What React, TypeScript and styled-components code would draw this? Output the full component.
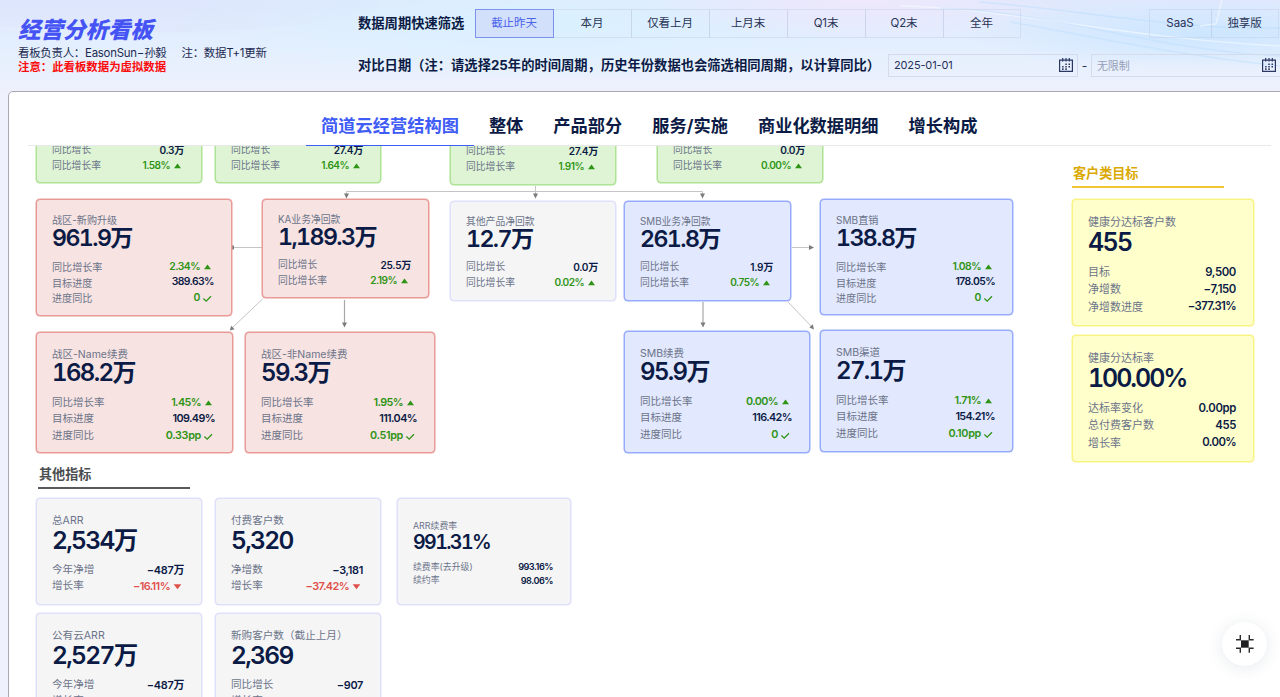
import React from 'react';
import styled, { createGlobalStyle, css } from 'styled-components';

const GlobalStyle = createGlobalStyle`
  * { box-sizing: border-box; }
  html, body { margin: 0; padding: 0; }
  body {
    width: 1280px;
    height: 697px;
    overflow: hidden;
    color: #0b1b45;
    font-family: Inter, "Noto Sans CJK SC", sans-serif;
  }
`;

/* ---------- page frame ---------- */

const Page = styled.div`
  position: relative;
  display: flex;
  flex-direction: column;
  width: 1280px;
  height: 697px;
  padding-left: 8px;
  overflow: hidden;
  background: #eff1fc;
`;

const Backdrop = styled.svg`
  position: absolute;
  left: 0;
  top: 0;
  width: 1280px;
  height: 160px;
`;

const Header = styled.header`
  position: relative;
  display: flex;
  height: 91px;
  flex: none;
`;

const Brand = styled.div`
  width: 350px;
  padding: 17px 0 0 10px;
`;

const BrandTitle = styled.h1`
  margin: 0;
  height: 29px;
  line-height: 25px;
  font-size: 22.5px;
  font-weight: 900;
  font-style: italic;
  color: #4553f5;
  white-space: nowrap;
`;

const BrandNote = styled.p<{ $alert?: boolean }>`
  display: flex;
  gap: 15px;
  margin: 0;
  height: 14px;
  line-height: 14px;
  font-size: 11.4px;
  white-space: nowrap;
  letter-spacing: ${(p) => (p.$alert ? 0 : '-0.22px')};
  color: ${(p) => (p.$alert ? '#fb0d0d' : '#1d2a50')};
  font-weight: ${(p) => (p.$alert ? 700 : 400)};
`;

const Filters = styled.div`
  display: flex;
  flex-direction: column;
  flex: 1;
  min-width: 0;
`;

const FilterRow = styled.div<{ $top: number; $height: number }>`
  display: flex;
  align-items: center;
  height: ${(p) => p.$height}px;
  margin-top: ${(p) => p.$top}px;
`;

const FilterLabel = styled.span<{ $width: number }>`
  flex: none;
  width: ${(p) => p.$width}px;
  padding-bottom: 2px;
  font-size: 13.3px;
  font-weight: 700;
  white-space: nowrap;
`;

const Segments = styled.div<{ $gap?: number }>`
  display: flex;
  flex: none;
  margin-left: ${(p) => p.$gap ?? 0}px;
`;

const Segment = styled.button<{ $width: number; $active?: boolean }>`
  width: ${(p) => p.$width}px;
  height: 29px;
  margin: 0 0 0 -1px;
  padding: 0 1px 2px 0;
  border: 1px solid rgba(190, 202, 226, 0.42);
  background: transparent;
  font: 400 11.5px/26px Inter, 'Noto Sans CJK SC', sans-serif;
  letter-spacing: -0.1px;
  color: #2a3557;
  &:first-child { margin-left: 0; }
  ${(p) =>
    p.$active &&
    css`
      position: relative;
      border-color: #7b93ec;
      background: #d3e0fb;
      color: #4a63ea;
    `}
`;

const DateBox = styled.div<{ $empty?: boolean; $width: number }>`
  display: flex;
  flex: none;
  align-items: center;
  justify-content: space-between;
  width: ${(p) => p.$width}px;
  height: 23px;
  padding: 0 4px 1px 5px;
  border: 1px solid #d5dbea;
  font-size: 11px;
  letter-spacing: -0.15px;
  color: ${(p) => (p.$empty ? '#979fb8' : '#26315a')};
`;

const Dash = styled.span`
  flex: none;
  width: 13px;
  text-align: center;
  font-size: 12px;
  color: #26315a;
`;

/* ---------- panel and tabs ---------- */

const Panel = styled.main`
  position: relative;
  display: flex;
  flex-direction: column;
  width: 1290px;
  height: 620px;
  border: 1px solid #a9a9b4;
  border-radius: 5px 0 0 0;
  background: #fff;
`;

const Tabs = styled.nav`
  display: flex;
  flex: none;
  width: 1243px;
  height: 54px;
  margin-left: 19px;
  padding-left: 278px;
  border-bottom: 1px solid #e9e9ed;
`;

const Tab = styled.a<{ $active?: boolean }>`
  height: 54px;
  padding: 20px 15px 0;
  line-height: 28px;
  font-size: 17.24px;
  font-weight: 700;
  white-space: nowrap;
  color: ${(p) => (p.$active ? '#3f5cf6' : '#0b1b45')};
  border-bottom: ${(p) => (p.$active ? '1px solid #3f5cf6' : '0')};
`;

const Board = styled.div`
  display: flex;
  height: 551px;
  overflow: hidden;
`;

const MainColumn = styled.div`
  width: 1063px;
  flex: none;
`;

const SideColumn = styled.aside`
  display: flex;
  flex-direction: column;
  width: 182px;
  padding-top: 16px;
`;

const Diagram = styled.div`
  position: relative;
  height: 317px;
`;

const Wires = styled.svg`
  position: absolute;
  left: 0;
  top: 0;
  overflow: visible;
`;

const SectionTitle = styled.h2<{ $tone: 'gold' | 'slate' }>`
  width: 152px;
  height: 26px;
  margin: 0;
  padding-left: 1px;
  line-height: 23px;
  font-size: 13.1px;
  font-weight: 700;
  color: ${(p) => (p.$tone === 'gold' ? '#dba904' : '#4b4d50')};
  border-bottom: 2px solid ${(p) => (p.$tone === 'gold' ? '#f2c535' : '#58595c')};
`;

const OtherMetrics = styled.section`
  padding-left: 27px;
  ${SectionTitle} { margin-left: 2px; }
`;

const CardRow = styled.div<{ $top: number }>`
  display: flex;
  margin-top: ${(p) => p.$top}px;
`;

/* ---------- metric card ---------- */

type Tone = 'green' | 'red' | 'blue' | 'gray' | 'yellow';
type Density = 'base' | 'mid' | 'large' | 'xl' | 'summary' | 'mini';

const tones: Record<Tone, [string, string]> = {
  green: ['#def4d5', '#aee295'],
  red: ['#f7e3e2', '#e99a96'],
  blue: ['#e2e8fd', '#97abfb'],
  gray: ['#f5f5f6', '#dfe0fb'],
  yellow: ['#ffffcc', '#f9f285'],
};

interface Metrics {
  label: number;
  value: number;
  titleY: number;
  valueY: number;
  rowY: number;
  pitch: number;
}

const densities: Record<Density, Metrics> = {
  base: { label: 9.8, value: 23.2, titleY: 21, valueY: 38, rowY: 66, pitch: 15.5 },
  mid: { label: 10.1, value: 23.2, titleY: 21, valueY: 39, rowY: 68, pitch: 15.7 },
  large: { label: 10.5, value: 24, titleY: 22.5, valueY: 41, rowY: 71, pitch: 16.6 },
  xl: { label: 11, value: 25, titleY: 23, valueY: 42.5, rowY: 73.5, pitch: 17.3 },
  summary: { label: 10.6, value: 24.5, titleY: 22.5, valueY: 41.5, rowY: 72, pitch: 16.6 },
  mini: { label: 8.9, value: 19.6, titleY: 28, valueY: 44, rowY: 69, pitch: 13.6 },
};

const CardBox = styled.article<{ $tone: Tone; $w: number; $h: number; $m: Metrics; $gap?: number }>`
  flex: none;
  width: ${(p) => p.$w}px;
  height: ${(p) => p.$h}px;
  margin-left: ${(p) => p.$gap ?? 0}px;
  padding: ${(p) => p.$m.titleY - 6}px 17px 0 15px;
  border: 1px solid ${(p) => tones[p.$tone][1]};
  border-radius: 4px;
  background: ${(p) => tones[p.$tone][0]};
  box-shadow: 0 0 0 0.5px ${(p) => tones[p.$tone][1]};
`;

const CardTitle = styled.div<{ $m: Metrics }>`
  height: 10px;
  line-height: 10px;
  font-size: ${(p) => p.$m.label}px;
  color: #6c7489;
  white-space: nowrap;
`;

const CardValue = styled.div<{ $m: Metrics; $percent: boolean }>`
  height: 22px;
  line-height: 22px;
  margin-top: ${(p) => p.$m.valueY - p.$m.titleY - 16}px;
  font-size: ${(p) => p.$m.value}px;
  font-weight: 600;
  letter-spacing: ${(p) => (p.$percent ? '-0.082em' : '-0.068em')};
  font-feature-settings: 'tnum';
  white-space: nowrap;
`;

const Rows = styled.div<{ $m: Metrics }>`
  margin-top: ${(p) => p.$m.rowY - p.$m.valueY - 11 - p.$m.pitch / 2}px;
`;

const Row = styled.div<{ $m: Metrics }>`
  display: flex;
  justify-content: space-between;
  align-items: center;
  height: ${(p) => p.$m.pitch}px;
  font-size: ${(p) => p.$m.label}px;
  line-height: 1;
  white-space: nowrap;
  color: #6c7489;
`;

type Mark = 'up' | 'down' | 'check';

const RowValue = styled.span<{ $mark?: Mark; $percent: boolean }>`
  display: flex;
  align-items: center;
  gap: 4px;
  padding-right: ${(p) => (p.$mark ? 3 : 0)}px;
  font-weight: 600;
  font-size: 1.03em;
  letter-spacing: ${(p) => (p.$percent ? '-0.055em' : '-0.03em')};
  color: ${(p) => (!p.$mark ? '#0b1b45' : p.$mark === 'down' ? '#e0504b' : '#2f9415')};
`;

const MarkIcon = ({ mark }: { mark: Mark }) => (
  <svg width="7" height="7" viewBox="0 0 7 7" style={{ overflow: 'visible' }}>
    {mark === 'up' && <path d="M0 6.2 3.5 1.4 7 6.2Z" fill="#2f9415" />}
    {mark === 'down' && <path d="M-.3 1.2H7.3L3.5 6.2Z" fill="#e0504b" />}
    {mark === 'check' && <path d="M-.6 3.6 2.2 6.2 7 1.3" fill="none" stroke="#2f9415" strokeWidth="1.3" />}
  </svg>
);

type RowData = [label: string, value: string, mark?: Mark];

interface CardData {
  title?: string;
  value?: string;
  tone: Tone;
  density: Density;
  w: number;
  h: number;
  rows: RowData[];
}

const Card = ({ title, value = '', tone, density, w, h, rows, gap }: CardData & { gap?: number }) => {
  const m = densities[density];
  return (
    <CardBox $tone={tone} $w={w} $h={h} $m={m} $gap={gap}>
      <CardTitle $m={m}>{title}</CardTitle>
      <CardValue $m={m} $percent={value.endsWith('%')}>{value}</CardValue>
      <Rows $m={m}>
        {rows.map(([label, text, mark]) => (
          <Row key={label} $m={m}>
            <span>{label}</span>
            <RowValue $mark={mark} $percent={text.endsWith('%')}>
              {text}
              {mark && <MarkIcon mark={mark} />}
            </RowValue>
          </Row>
        ))}
      </Rows>
    </CardBox>
  );
};

const Node = styled.div<{ $x: number; $y: number }>`
  position: absolute;
  left: ${(p) => p.$x}px;
  top: ${(p) => p.$y}px;
`;

/* ---------- data ---------- */

const nodes: (CardData & { x: number; y: number })[] = [
  { x: 27, y: -62, w: 166, h: 99, tone: 'green', density: 'base', rows: [['同比增长', '0.3万'], ['同比增长率', '1.58%', 'up']] },
  { x: 206, y: -62, w: 166, h: 99, tone: 'green', density: 'base', rows: [['同比增长', '27.4万'], ['同比增长率', '1.64%', 'up']] },
  { x: 441, y: -61, w: 166, h: 100, tone: 'green', density: 'base', rows: [['同比增长', '27.4万'], ['同比增长率', '1.91%', 'up']] },
  { x: 648, y: -62, w: 166, h: 99, tone: 'green', density: 'base', rows: [['同比增长', '0.0万'], ['同比增长率', '0.00%', 'up']] },
  { x: 27, y: 53, w: 196, h: 117, tone: 'red', density: 'mid', title: '战区-新购升级', value: '961.9万', rows: [['同比增长率', '2.34%', 'up'], ['目标进度', '389.63%'], ['进度同比', '0', 'check']] },
  { x: 253, y: 53, w: 167, h: 99, tone: 'red', density: 'base', title: 'KA业务净回款', value: '1,189.3万', rows: [['同比增长', '25.5万'], ['同比增长率', '2.19%', 'up']] },
  { x: 441, y: 55, w: 166, h: 100, tone: 'gray', density: 'base', title: '其他产品净回款', value: '12.7万', rows: [['同比增长', '0.0万'], ['同比增长率', '0.02%', 'up']] },
  { x: 615, y: 55, w: 167, h: 100, tone: 'blue', density: 'base', title: 'SMB业务净回款', value: '261.8万', rows: [['同比增长', '1.9万'], ['同比增长率', '0.75%', 'up']] },
  { x: 811, y: 53, w: 193, h: 116, tone: 'blue', density: 'mid', title: 'SMB直销', value: '138.8万', rows: [['同比增长率', '1.08%', 'up'], ['目标进度', '178.05%'], ['进度同比', '0', 'check']] },
  { x: 27, y: 186, w: 197, h: 121, tone: 'red', density: 'large', title: '战区-Name续费', value: '168.2万', rows: [['同比增长率', '1.45%', 'up'], ['目标进度', '109.49%'], ['进度同比', '0.33pp', 'check']] },
  { x: 236, y: 186, w: 190, h: 121, tone: 'red', density: 'large', title: '战区-非Name续费', value: '59.3万', rows: [['同比增长率', '1.95%', 'up'], ['目标进度', '111.04%'], ['进度同比', '0.51pp', 'check']] },
  { x: 615, y: 185, w: 186, h: 122, tone: 'blue', density: 'large', title: 'SMB续费', value: '95.9万', rows: [['同比增长率', '0.00%', 'up'], ['目标进度', '116.42%'], ['进度同比', '0', 'check']] },
  { x: 811, y: 184, w: 193, h: 122, tone: 'blue', density: 'large', title: 'SMB渠道', value: '27.1万', rows: [['同比增长率', '1.71%', 'up'], ['目标进度', '154.21%'], ['进度同比', '0.10pp', 'check']] },
];

const goals: CardData[] = [
  { w: 182, h: 127, tone: 'yellow', density: 'xl', title: '健康分达标客户数', value: '455', rows: [['目标', '9,500'], ['净增数', '−7,150'], ['净增数进度', '−377.31%']] },
  { w: 182, h: 127, tone: 'yellow', density: 'xl', title: '健康分达标率', value: '100.00%', rows: [['达标率变化', '0.00pp'], ['总付费客户数', '455'], ['增长率', '0.00%']] },
];

const others: CardData[][] = [
  [
    { w: 166, h: 107, tone: 'gray', density: 'summary', title: '总ARR', value: '2,534万', rows: [['今年净增', '−487万'], ['增长率', '−16.11%', 'down']] },
    { w: 166, h: 107, tone: 'gray', density: 'summary', title: '付费客户数', value: '5,320', rows: [['净增数', '−3,181'], ['增长率', '−37.42%', 'down']] },
    { w: 174, h: 107, tone: 'gray', density: 'mini', title: 'ARR续费率', value: '991.31%', rows: [['续费率(去升级)', '993.16%'], ['续约率', '98.06%']] },
  ],
  [
    { w: 166, h: 107, tone: 'gray', density: 'summary', title: '公有云ARR', value: '2,527万', rows: [['今年净增', '−487万'], ['增长率', '−16.15%', 'down']] },
    { w: 166, h: 107, tone: 'gray', density: 'summary', title: '新购客户数（截止上月）', value: '2,369', rows: [['同比增长', '−907'], ['增长率', '−27.69%', 'down']] },
  ],
];

const periods: [string, number][] = [
  ['截止昨天', 79], ['本月', 79], ['仅看上月', 79], ['上月末', 79], ['Q1末', 79], ['Q2末', 79], ['全年', 78],
];

const tabs = ['简道云经营结构图', '整体', '产品部分', '服务/实施', '商业化数据明细', '增长构成'];

/* ---------- icons and drawings ---------- */

const CalendarIcon = () => (
  <svg width="14" height="14" viewBox="0 0 14 14" fill="none" stroke="#2b3763">
    <path d="M.6 2.2H13.4V13.4H.6Z" strokeWidth="1.2" />
    <path d="M3.7 0V3.6M7 0V3.6M10.3 0V3.6" strokeWidth="1.2" />
    <path d="M6.3 6.2h1.5M9.5 6.2h1.5M3.1 8.7h1.5M6.3 8.7h1.5M9.5 8.7h1.5M3.1 11.1h1.5M6.3 11.1h1.5" strokeWidth="1.6" />
  </svg>
);

const Sky = () => (
  <Backdrop viewBox="0 0 1280 160" preserveAspectRatio="none">
    <defs>
      <linearGradient id="base" x1="0" y1="0" x2="0" y2="1">
        <stop offset="0" stopColor="#dfe8fd" />
        <stop offset=".3" stopColor="#e4effe" />
        <stop offset=".6" stopColor="#eff1fc" />
      </linearGradient>
      <radialGradient id="cyan">
        <stop offset="0" stopColor="#daf1ff" />
        <stop offset="1" stopColor="#daf1ff" stopOpacity="0" />
      </radialGradient>
      <radialGradient id="blue">
        <stop offset="0" stopColor="#cce6ff" />
        <stop offset="1" stopColor="#cce6ff" stopOpacity="0" />
      </radialGradient>
      <radialGradient id="lilac">
        <stop offset="0" stopColor="#f0e8fc" />
        <stop offset="1" stopColor="#f0e8fc" stopOpacity="0" />
      </radialGradient>
    </defs>
    <rect width="1280" height="160" fill="url(#base)" />
    <ellipse cx="150" cy="0" rx="230" ry="32" fill="#d9e0fc" opacity=".3" />
    <ellipse cx="540" cy="22" rx="370" ry="56" fill="url(#cyan)" />
    <ellipse cx="860" cy="-4" rx="220" ry="44" fill="url(#lilac)" />
    <ellipse cx="1200" cy="34" rx="240" ry="36" fill="url(#blue)" />
    <g fill="none" strokeWidth="1.4">
      <path d="M900 6C1010 8 1120 38 1280 46" stroke="#f7fbff" opacity=".6" />
      <path d="M980 2C1080 10 1180 30 1280 28" stroke="#b9ddfd" opacity=".5" />
      <path d="M1010 22C1100 38 1170 54 1280 66" stroke="#c2e1fe" opacity=".6" />
      <path d="M940 8C1060 12 1150 50 1280 56" stroke="#b9ddfd" opacity=".4" />
      <path d="M1222 0 1216 24 1200 26" stroke="#fff" opacity=".5" />
    </g>
  </Backdrop>
);

const Connectors = () => (
  <Wires width="1062" height="317" viewBox="9 146 1062 317" fill="none" stroke="#c4c4c4">
    <path d="M346.5 195V191.5H702.5V195" />
    <path d="M535.5 186V194M232 247.5H262M792 247.5H809" />
    <path d="M344.5 300V323M703 302V323" stroke="#a8a8a8" strokeWidth="1.2" />
    <path d="M262.5 299 232 328M788 302 812 327" />
    <g fill="#7b7b7b" stroke="none">
      <path d="M344 193.5h5l-2.5 5zM533 193.5h5l-2.5 5zM700 193.5h5l-2.5 5z" />
      <path d="M342 322.5h5l-2.5 5zM700.5 322.5h5l-2.5 5z" />
      <path d="M232 245.5h2v4h-2zM809 245v5l5-2.5z" />
      <path d="M229.8 330.5 231.2 325.8 234.6 329.3zM814 329.5 809.3 327.6 812.8 324.2z" />
    </g>
  </Wires>
);

const FloatButton = styled.button`
  position: absolute;
  left: 1222px;
  top: 622px;
  display: flex;
  align-items: center;
  justify-content: center;
  width: 45px;
  height: 44px;
  padding: 0;
  border: 0;
  border-radius: 50%;
  background: #fff;
  box-shadow: 0 2px 16px rgba(60, 70, 110, 0.12);
`;

export default function App() {
  return (
    <Page>
      <GlobalStyle />
      <Sky />
      <Header>
        <Brand>
          <BrandTitle>经营分析看板</BrandTitle>
          <BrandNote>
            <span>看板负责人：EasonSun−孙毅</span>
            <span>注：数据T+1更新</span>
          </BrandNote>
          <BrandNote $alert>注意：此看板数据为虚拟数据</BrandNote>
        </Brand>
        <Filters>
          <FilterRow $top={9} $height={29}>
            <FilterLabel $width={117}>数据周期快速筛选</FilterLabel>
            <Segments>
              {periods.map(([name, width], i) => (
                <Segment key={name} $width={width} $active={i === 0}>{name}</Segment>
              ))}
            </Segments>
            <Segments $gap={128}>
              <Segment $width={63}>SaaS</Segment>
              <Segment $width={68}>独享版</Segment>
            </Segments>
          </FilterRow>
          <FilterRow $top={16} $height={23}>
            <FilterLabel $width={530}>
              对比日期（注：请选择25年的时间周期，历史年份数据也会筛选相同周期，以计算同比）
            </FilterLabel>
            <DateBox $width={190}>
              2025-01-01
              <CalendarIcon />
            </DateBox>
            <Dash>-</Dash>
            <DateBox $width={190} $empty>
              无限制
              <CalendarIcon />
            </DateBox>
          </FilterRow>
        </Filters>
      </Header>
      <Panel>
        <Tabs>
          {tabs.map((name, i) => (
            <Tab key={name} $active={i === 0}>{name}</Tab>
          ))}
        </Tabs>
        <Board>
          <MainColumn>
            <Diagram>
              <Connectors />
              {nodes.map(({ x, y, ...card }) => (
                <Node key={`${x}:${y}`} $x={x} $y={y}>
                  <Card {...card} />
                </Node>
              ))}
            </Diagram>
            <OtherMetrics>
              <SectionTitle $tone="slate">其他指标</SectionTitle>
              <CardRow $top={9}>
                {others[0].map((c, i) => (
                  <Card key={c.title} {...c} gap={[0, 13, 16][i]} />
                ))}
              </CardRow>
              <CardRow $top={8}>
                {others[1].map((c, i) => (
                  <Card key={c.title} {...c} gap={[0, 13][i]} />
                ))}
              </CardRow>
            </OtherMetrics>
          </MainColumn>
          <SideColumn>
            <SectionTitle $tone="gold">客户类目标</SectionTitle>
            {goals.map((c, i) => (
              <CardRow key={c.title} $top={[11, 9][i]}>
                <Card {...c} />
              </CardRow>
            ))}
          </SideColumn>
        </Board>
      </Panel>
      <FloatButton aria-label="collapse">
        <svg width="18" height="18" viewBox="0 0 18 18" fill="none" stroke="#2a2a2c" strokeWidth="1.4">
          <path d="M0 4.7H4.3V0M13.3 0V4.7H17.6M0 13.3H4.3V17.8M13.3 17.8V13.3H17.6" />
          <path d="M5 5.3H12.7V12.7H5Z" fill="#1f1f21" stroke="none" />
        </svg>
      </FloatButton>
    </Page>
  );
}
